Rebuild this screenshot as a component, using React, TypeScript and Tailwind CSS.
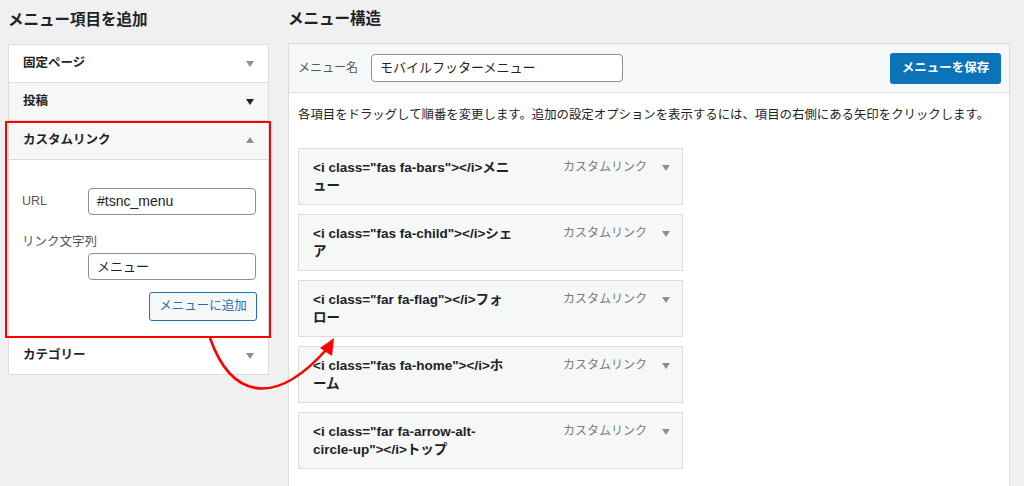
import React from "react";

const font = "font-['Liberation_Sans','Noto_Sans_CJK_JP',sans-serif]";

const Caret = ({ up = false, dark = false }: { up?: boolean; dark?: boolean }) => (
  <svg width="8" height="6" viewBox="0 0 8 6" className="shrink-0">
    <polygon
      points={up ? "0,6 8,6 4,0" : "0,0 8,0 4,6"}
      fill={dark ? "#1d2327" : "#8c8f94"}
    />
  </svg>
);

const Row = ({ label, dark = false, hover = false }: { label: string; dark?: boolean; hover?: boolean }) => (
  <div
    className={
      "h-[38px] border-b border-x border-[#dcdcde] flex items-center justify-between pl-[14px] pr-[14px] " +
      (hover ? "bg-[#f6f7f7]" : "bg-white")
    }
  >
    <span className="text-[12.5px] font-bold text-[#1d2327]">{label}</span>
    <Caret dark={dark} />
  </div>
);

const items: string[][] = [
  ['<i class="fas fa-bars"></i>メニ', "ュー"],
  ['<i class="fas fa-child"></i>シェ', "ア"],
  ['<i class="far fa-flag"></i>フォ', "ロー"],
  ['<i class="fas fa-home"></i>ホ', "ーム"],
  ['<i class="far fa-arrow-alt-', 'circle-up"></i>トップ'],
];

export default function App() {
  return (
    <div className={"relative w-[1024px] h-[486px] overflow-hidden bg-[#f0f0f1] flex pl-[8px] gap-[19px] text-[#1d2327] " + font}>
      {/* left column */}
      <div className="w-[261px] shrink-0">
        <h2 className="h-[44px] pt-[9px] text-[15.5px] leading-[22px] font-bold">メニュー項目を追加</h2>
        <div className="border-t border-[#dcdcde]">
          <Row label="固定ページ" />
          <Row label="投稿" dark hover />
          <div className="h-[39px] bg-[#f6f7f7] border-b border-x border-[#dcdcde] flex items-center justify-between px-[14px]">
            <span className="text-[12.5px] font-bold">カスタムリンク</span>
            <Caret up />
          </div>
          <div className="h-[177px] bg-white border-b border-x border-[#dcdcde] pl-[13px] pt-[28px]">
            <div className="flex items-center">
              <span className="w-[66px] text-[12.5px] text-[#50575e]">URL</span>
              <div className="w-[168px] h-[27px] border border-[#8c8f94] rounded-[4px] bg-white flex items-center px-[8px] text-[14px]">
                #tsnc_menu
              </div>
            </div>
            <div className="mt-[18px] leading-[18px] text-[12.5px] text-[#50575e]">リンク文字列</div>
            <div className="ml-[66px] mt-[2px] w-[168px] h-[27px] border border-[#8c8f94] rounded-[4px] bg-white flex items-center px-[8px] text-[13px]">
              メニュー
            </div>
            <div className="flex justify-end w-[235px] mt-[12px]">
              <div className="h-[29px] w-[108px] border border-[#2271b1] rounded-[3px] bg-[#f6f7f7] text-[#2271b1] text-[12.5px] flex items-center justify-center">
                メニューに追加
              </div>
            </div>
          </div>
          <Row label="カテゴリー" />
        </div>
      </div>

      {/* right column */}
      <div className="w-[722px] shrink-0">
        <h2 className="h-[43px] pt-[8px] text-[15.5px] leading-[22px] font-bold">メニュー構造</h2>
        <div className="border border-[#dcdcde] h-[460px] bg-white">
          <div className="h-[49px] bg-[#f6f7f7] border-b border-[#dcdcde] flex items-center justify-between pl-[9px] pr-[8px]">
            <div className="flex items-center">
              <span className="text-[12px] text-[#50575e] w-[73px]">メニュー名</span>
              <div className="w-[252px] h-[28px] border border-[#8c8f94] rounded-[4px] bg-white flex items-center px-[8px] text-[13px]">
                モバイルフッターメニュー
              </div>
            </div>
            <div className="w-[111px] h-[31px] rounded-[3px] bg-[#0b74b8] text-white text-[12.5px] font-bold flex items-center justify-center">
              メニューを保存
            </div>
          </div>
          <div className="pl-[9px] pt-[13px]">
            <p className="text-[12.4px] leading-[18px] text-[#1d2327] whitespace-nowrap">
              各項目をドラッグして順番を変更します。追加の設定オプションを表示するには、項目の右側にある矢印をクリックします。
            </p>
            <div className="mt-[24px] flex flex-col gap-[9px] w-[385px]">
              {items.map((lines, i) => (
                <div
                  key={i}
                  className="h-[57px] border border-[#dcdcde] bg-[#f6f7f7] flex justify-between pl-[14px] pr-[12px] pt-[10px]"
                >
                  <div className="text-[13.5px] leading-[17.5px] font-bold">
                    {lines.map((l, j) => (
                      <div key={j} className="whitespace-nowrap">{l}</div>
                    ))}
                  </div>
                  <div className="flex items-start gap-[15px]">
                    <span className="text-[12px] leading-[17.5px] text-[#787c82]">カスタムリンク</span>
                    <div className="pt-[6px]">
                      <Caret />
                    </div>
                  </div>
                </div>
              ))}
            </div>
          </div>
        </div>
      </div>

      {/* annotation: red frame + arrow */}
      <div className="absolute left-[5px] top-[121px] w-[266px] h-[217px] border-2 border-[#ff0000] pointer-events-none" />
      <svg className="absolute left-0 top-0 pointer-events-none" width="1024" height="486" viewBox="0 0 1024 486">
        <path d="M210 338 C 230 395, 272 410, 326 350" fill="none" stroke="#ff0000" strokeWidth="2.6" />
        <polygon points="334,338 320,348 332,356" fill="#ff0000" />
      </svg>
    </div>
  );
}
